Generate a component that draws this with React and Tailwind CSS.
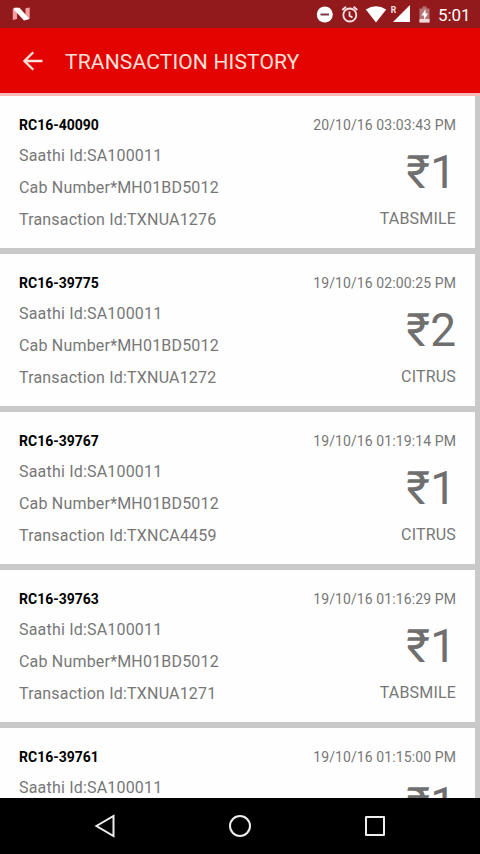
import React from "react";

const transactions = [
  { id: "RC16-40090", date: "20/10/16 03:03:43 PM", txn: "TXNUA1276", amount: "1", method: "TABSMILE" },
  { id: "RC16-39775", date: "19/10/16 02:00:25 PM", txn: "TXNUA1272", amount: "2", method: "CITRUS" },
  { id: "RC16-39767", date: "19/10/16 01:19:14 PM", txn: "TXNCA4459", amount: "1", method: "CITRUS" },
  { id: "RC16-39763", date: "19/10/16 01:16:29 PM", txn: "TXNUA1271", amount: "1", method: "TABSMILE" },
  { id: "RC16-39761", date: "19/10/16 01:15:00 PM", amount: "1" },
];

function StatusIcons() {
  return (
    <svg width="116" height="28" viewBox="316 0 116 28" className="shrink-0">
      <circle cx="324.800" cy="14.500" r="8" fill="#fff" />
      <path d="M320.500 14.500h8.500" stroke="#7c3a44" strokeWidth="2" />
      <g fill="none" stroke="#fbe3e3" strokeWidth="1.800">
        <circle cx="349.800" cy="15" r="6.500" />
        <path d="M349.500 11.500v4.200l3 1.800M342.300 10l3.700-3.200M357.300 10l-3.700-3.200" />
      </g>
      <path d="M365.800 9.500Q376 2.800 386.200 9.500L376 22.500z" fill="#fff" />
      <path d="M410 5v17h-17z" fill="#fff" />
      <text x="390.800" y="12.700" fill="#fbe3e3" fontSize="8.500" fontWeight="700">R</text>
      <path d="M419.500 8.500h3V6.500h4v2h3V22.500h-10z" fill="#b87577" />
      <path d="M419.500 19h10v3.500h-10z" fill="#f3dada" />
      <path d="m425.500 9-4 6.500h2.500v4.500l4-6.500h-2.500z" fill="#fff" />
    </svg>
  );
}

function Header() {
  return (
    <>
      <div className="flex h-7 shrink-0 items-center justify-between bg-[#931a1c] pl-3 pr-[10px] text-white">
        <svg width="19" height="14" viewBox="0 0 19 14">
          <path d="M.8 1.500 5 .8V12l-4.200 1z" fill="#f0a0a2" />
          <path d="M13.500 1.200 17.700.6V11.500l-4.200 1.200z" fill="#f0a0a2" />
          <path d="M2.200.7h5.300L17.500 12 12 13.500 2.200 3z" fill="#fff" />
        </svg>
        <div className="flex items-center gap-[6px]">
          <StatusIcons />
          <span className="mt-px w-8 whitespace-nowrap text-[17px] leading-7 tracking-[-0.1px]">5:01</span>
        </div>
      </div>
      <header className="flex h-[65px] shrink-0 items-center bg-[#e30400] pl-[23px] pt-px text-[#ffe0da]">
        <svg width="20" height="20" viewBox="0 0 20 20" fill="none" stroke="currentColor" strokeWidth="2.300">
          <path d="M19.500 10H2M10.300 1.200 1.500 10l8.800 8.800" />
        </svg>
        <h1 className="ml-[22px] mt-px whitespace-nowrap text-[21px] leading-7 tracking-[0.16px]">TRANSACTION HISTORY</h1>
      </header>
      <div className="h-[3px] shrink-0 bg-[#f9babb]" />
    </>
  );
}

function TransactionCard({ item }) {
  return (
    <article className="mb-[6px] flex h-[152px] shrink-0 justify-between bg-[#fefefe] pl-[19px] pr-[19px] pt-[19px] text-base text-[#777]">
      <div className="flex flex-col whitespace-nowrap tracking-[0.19px]">
        <div className="mb-[5px] h-5 text-sm leading-5 font-bold tracking-normal text-black">{item.id}</div>
        <div className="h-8 leading-8">Saathi Id:SA100011</div>
        {item.txn && (
          <>
            <div className="h-8 leading-8">Cab Number*MH01BD5012</div>
            <div className="h-8 leading-8">Transaction Id:{item.txn}</div>
          </>
        )}
      </div>
      <div className="flex flex-col items-end whitespace-nowrap">
        <div className="h-5 text-sm leading-5 tracking-[0.1px]">{item.date}</div>
        <div className="mt-3 h-[50px] text-[46px] leading-[50px] text-[#6f6f6f]">₹{item.amount}</div>
        {item.method && <div className="mt-[6px] h-8 leading-8 tracking-[0.18px]">{item.method}</div>}
      </div>
    </article>
  );
}

function NavigationBar() {
  return (
    <nav className="flex h-14 shrink-0 items-center justify-between bg-black pl-[93px] pr-[93px] text-[#eee]">
      <svg width="24" height="24" viewBox="0 0 24 24" fill="none" stroke="currentColor" strokeWidth="2">
        <path d="M20.500 2v20L3.500 12z" />
      </svg>
      <svg width="24" height="24" viewBox="0 0 24 24" fill="none" stroke="currentColor" strokeWidth="2">
        <circle cx="12" cy="12" r="10" />
      </svg>
      <svg width="24" height="24" viewBox="0 0 24 24" fill="none" stroke="currentColor" strokeWidth="2" strokeLinejoin="round">
        <rect x="3" y="3" width="18" height="18" />
      </svg>
    </nav>
  );
}

export default function App() {
  return (
    <div className="flex h-[854px] w-[480px] flex-col overflow-hidden bg-[#c9c9c9] font-[Roboto,sans-serif]">
      <Header />
      <main className="flex min-h-0 flex-1 flex-col overflow-hidden pr-[5px]">
        {transactions.map((item) => (
          <TransactionCard key={item.id} item={item} />
        ))}
      </main>
      <NavigationBar />
    </div>
  );
}
